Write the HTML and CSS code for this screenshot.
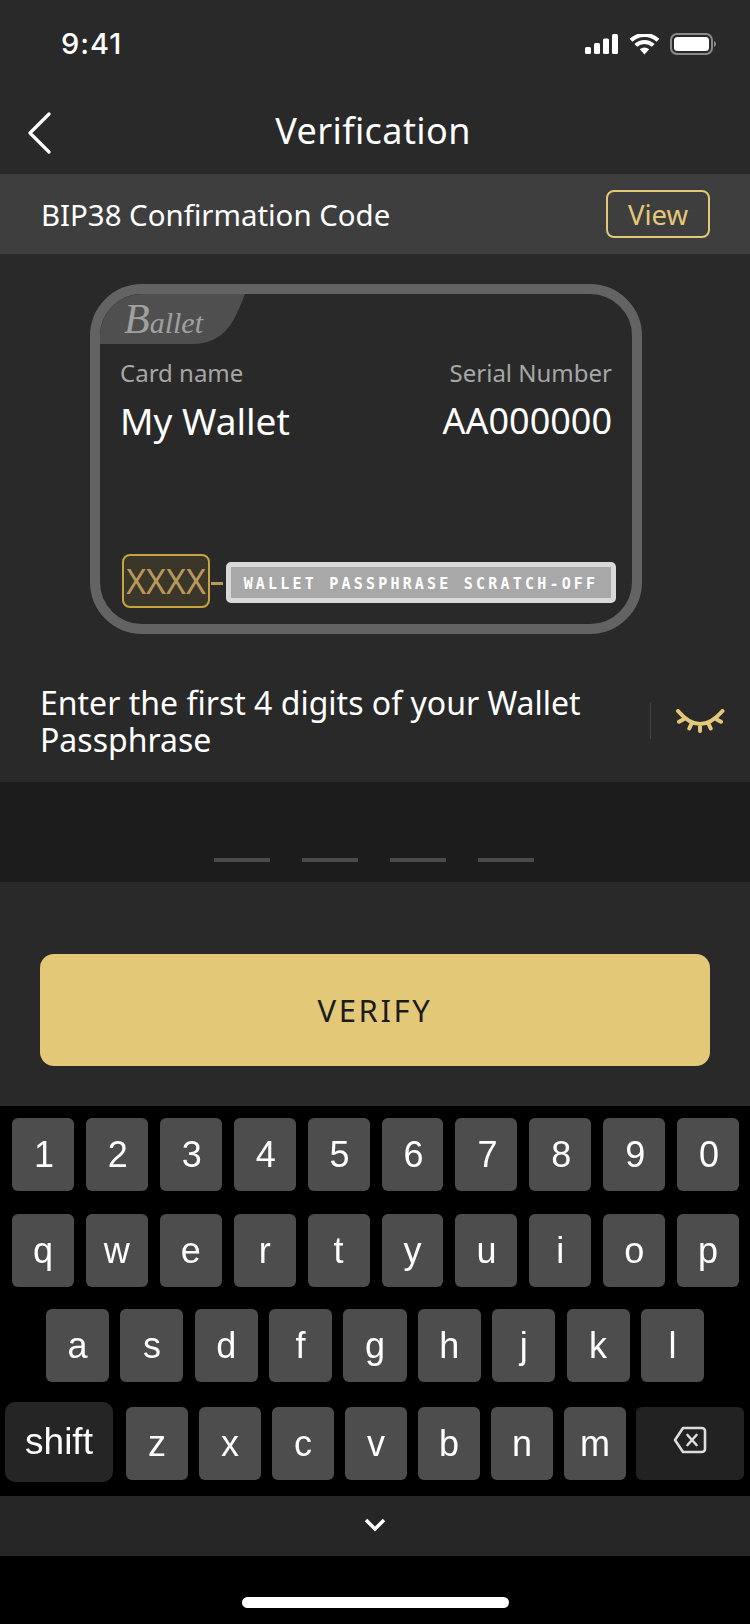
FILE: index.html
```html
<!DOCTYPE html>
<html lang="en">
<head>
<meta charset="utf-8">
<title>Verification</title>
<link rel="stylesheet" href="styles.css">
</head>
<body>
<div class="app">
  <div class="status">
    <span class="time">9:41</span>
    <div class="status-icons">
      <svg class="ic-signal" viewBox="0 0 33 20"><rect x="0" y="13" width="6" height="7" rx="1.5"/><rect x="9" y="9" width="6" height="11" rx="1.5"/><rect x="18" y="4.5" width="6" height="15.5" rx="1.5"/><rect x="27" y="0" width="6" height="20" rx="1.5"/></svg>
      <svg class="ic-wifi" viewBox="0 0 31 21"><path d="M15.5 20.5l-4.7-5.2a7 7 0 0 1 9.4 0z"/><path class="arc" d="M6.8 11.4a12.6 12.6 0 0 1 17.4 0"/><path class="arc" d="M2 6.3a19.6 19.6 0 0 1 27 0"/></svg>
      <svg class="ic-batt" viewBox="0 0 46 22"><rect class="batt-shell" x="1" y="1" width="41" height="20" rx="6"/><rect class="batt-fill" x="4" y="4" width="35" height="14" rx="3.5"/><path class="batt-nub" d="M44 8c1.300.4 2 1.600 2 3s-.7 2.600-2 3z"/></svg>
    </div>
  </div>

  <header class="nav">
    <svg class="ic-back" viewBox="0 0 24 42"><path d="M22 2L3 21l19 19"/></svg>
    <h1 class="nav-title">Verification</h1>
  </header>

  <div class="code-bar">
    <span class="code-label">BIP38 Confirmation Code</span>
    <span class="view-btn">View</span>
  </div>

  <div class="card-wrap">
    <div class="card">
      <div class="tab"><span class="brand">Ballet</span></div>
      <div class="card-labels"><span>Card name</span><span>Serial Number</span></div>
      <div class="card-values"><span>My Wallet</span><span class="serial">AA000000</span></div>
      <div class="card-foot">
        <span class="xxxx">XXXX</span>
        <span class="dash"></span>
        <div class="scratch"><span>WALLET PASSPHRASE SCRATCH-OFF</span></div>
      </div>
    </div>
  </div>

  <div class="prompt">
    <p class="prompt-text">Enter the first 4 digits of your Wallet Passphrase</p>
    <span class="prompt-div"></span>
    <svg class="ic-eye" viewBox="0 0 50 24"><path d="M3 2Q25 28 47.500 2M10 9.500L4 12.700M17 13.500L14.300 19.500M25 15V22M33 13.500L35.700 19.500M40 9.500L46 12.700"/></svg>
  </div>

  <div class="pin">
    <span class="pin-slot"></span><span class="pin-slot"></span><span class="pin-slot"></span><span class="pin-slot"></span>
  </div>

  <div class="action"><div class="verify">VERIFY</div></div>

  <div class="keyboard">
    <div class="row row-num">
      <span class="key">1</span><span class="key">2</span><span class="key">3</span><span class="key">4</span><span class="key">5</span><span class="key">6</span><span class="key">7</span><span class="key">8</span><span class="key">9</span><span class="key">0</span>
    </div>
    <div class="row row-top">
      <span class="key">q</span><span class="key">w</span><span class="key">e</span><span class="key">r</span><span class="key">t</span><span class="key">y</span><span class="key">u</span><span class="key">i</span><span class="key">o</span><span class="key">p</span>
    </div>
    <div class="row row-mid">
      <span class="key">a</span><span class="key">s</span><span class="key">d</span><span class="key">f</span><span class="key">g</span><span class="key">h</span><span class="key">j</span><span class="key">k</span><span class="key">l</span>
    </div>
    <div class="row row-bot">
      <span class="key shift">shift</span>
      <div class="letters">
        <span class="key">z</span><span class="key">x</span><span class="key">c</span><span class="key">v</span><span class="key">b</span><span class="key">n</span><span class="key">m</span>
      </div>
      <span class="key del"><svg class="ic-del" viewBox="0 0 34 28"><path d="M10 2H29a3 3 0 0 1 3 3V23a3 3 0 0 1-3 3H10L2 14zM14.500 9l9 10M23.500 9l-9 10"/></svg></span>
    </div>
    <div class="kb-bar">
      <svg class="ic-down" viewBox="0 0 22 14"><path d="M2 2l9 9 9-9"/></svg>
    </div>
    <div class="home-zone"><span class="home"></span></div>
  </div>
</div>
</body>
</html>
```
FILE: styles.css
```css
* { box-sizing: border-box; }
html, body { margin: 0; padding: 0; }
body { background: #292929; font-family: "Noto Sans", sans-serif; color: #fff; }
.app { width: 750px; height: 1624px; display: flex; flex-direction: column; overflow: hidden; }

.status { height: 88px; flex: none; display: flex; align-items: center; justify-content: space-between; padding: 0 34px 0 61px; }
.time { font-family: Inter, sans-serif; font-weight: 500; font-size: 29px; line-height: 34px; letter-spacing: 1px; }
.status-icons { display: flex; align-items: center; }
.ic-signal { width: 33px; height: 20px; fill: #fff; }
.ic-wifi { width: 31px; height: 21px; margin-left: 11px; fill: #fff; }
.ic-wifi .arc { fill: none; stroke: #fff; stroke-width: 4; }
.ic-batt { width: 46px; height: 22px; margin-left: 10px; }
.batt-shell { fill: none; stroke: #8a8a8a; stroke-width: 2; }
.batt-fill { fill: #fff; }
.batt-nub { fill: #8a8a8a; }

.nav { height: 86px; flex: none; display: flex; align-items: center; justify-content: center; padding-right: 4px; position: relative; }
.ic-back { position: absolute; left: 27px; top: 24px; width: 24px; height: 42px; fill: none; stroke: #fff; stroke-width: 3.2; stroke-linecap: round; stroke-linejoin: round; }
.nav-title { margin: 0; font-size: 36px; font-weight: 400; line-height: 48px; letter-spacing: .4px; }

.code-bar { height: 80px; flex: none; background: #3e3e3e; display: flex; align-items: center; justify-content: space-between; padding: 0 40px; }
.code-label { font-size: 29.400px; line-height: 40px; padding: 2px 0 0 1px; }
.view-btn { width: 104px; height: 48px; border: 2px solid #e3c878; border-radius: 8px; color: #e3c878; font-size: 27.500px; display: flex; align-items: center; justify-content: center; }

.card-wrap { height: 380px; flex: none; padding: 30px 108px 0 90px; }
.card { width: 552px; height: 350px; border: 10px solid #636363; border-radius: 52px; display: flex; flex-direction: column; overflow: hidden; }
.tab { width: 145px; height: 50px; flex: none; background: #4f4f4f; clip-path: path("M0 0H145C136 22 128 50 92 50H0Z"); padding: 0 0 0 24px; }
.brand { display: inline-block; font-family: "Liberation Serif", serif; font-style: italic; font-size: 30px; line-height: 50px; color: #a0a0a0; }
.brand::first-letter { font-size: 42px; }
.card-labels { display: flex; justify-content: space-between; padding: 0 20px; margin-top: 12px; font-size: 24px; line-height: 34px; color: #a6a6a6; }
.card-values { display: flex; justify-content: space-between; align-items: center; padding: 0 20px; margin-top: 7px; font-size: 37px; line-height: 48px; }
.serial { font-size: 36px; }
.card-foot { display: flex; align-items: center; padding: 0 16px 0 22px; margin-top: 109px; }
.xxxx { width: 88px; height: 54px; flex: none; border: 2px solid #c9a33f; border-radius: 8px; background: #3b362a; color: #b8995a; font-size: 34px; display: flex; align-items: center; justify-content: center; }
.dash { width: 12px; height: 3px; flex: none; background: #b8995a; margin: 4px 3px 0 1px; }
.scratch { width: 390px; height: 41px; flex: none; margin-top: 2px; padding-top: 3px; background: #a8a8a8; border: 5px solid #d9d9d9; border-radius: 5px; display: flex; align-items: center; justify-content: center; }
.scratch span { font-family: "DejaVu Sans Mono", monospace; font-weight: 700; font-size: 15px; letter-spacing: 3.200px; color: #fff; white-space: nowrap; }

.prompt { height: 148px; flex: none; display: flex; align-items: center; padding: 26px 25px 0 40px; }
.prompt-text { margin: 0; width: 600px; font-size: 32px; line-height: 37px; flex: none; }
.prompt-div { width: 1px; height: 36px; background: #444; margin: 0 0 0 10px; flex: none; }
.ic-eye { width: 50px; height: 24px; margin-left: 24px; flex: none; fill: none; stroke: #e3c878; stroke-width: 4; stroke-linecap: round; }

.pin { height: 100px; flex: none; background: #1c1c1c; display: flex; justify-content: center; gap: 32px; padding: 76px 2px 0 0; }
.pin-slot { width: 56px; height: 4px; background: #4a4a4a; }

.action { height: 224px; flex: none; padding: 72px 40px 0; }
.verify { height: 112px; background: #e3c878; border-radius: 14px; display: flex; align-items: center; justify-content: center; color: #1c1c1c; font-size: 31px; letter-spacing: 2.600px; }

.keyboard { flex: 1; background: #000; display: flex; flex-direction: column; font-family: "Liberation Sans", sans-serif; }
.row { display: flex; flex: none; }
.key { height: 73px; flex: 1; background: #4d4d4d; border-radius: 6px; color: #fff; font-size: 36px; display: flex; align-items: center; justify-content: center; filter: blur(.5px); }
.row-num { padding: 12px 11px 0 12px; gap: 12px; }
.row-num .key { padding-left: 2px; }
.row-top { padding: 23px 11px 0 12px; gap: 12px; }
.row-mid { padding: 22px 46px 0 46px; gap: 11.300px; }
.row-bot { padding: 20px 6px 0 5px; align-items: center; }
.key.shift { flex: none; width: 108px; height: 80px; background: #252525; border-radius: 10px; font-size: 37px; }
.letters { flex: 1; display: flex; gap: 11px; padding: 3px 10px 0 13px; }
.key.del { flex: none; width: 108px; margin-top: 3px; background: #222; }
.ic-del { width: 34px; height: 28px; fill: none; stroke: #ddd; stroke-width: 2.600; stroke-linejoin: round; stroke-linecap: round; margin-top: -7px; }
.kb-bar { height: 60px; flex: none; margin-top: 14px; background: #262626; display: flex; align-items: center; justify-content: center; }
.ic-down { width: 22px; height: 14px; fill: none; stroke: #fff; stroke-width: 3.500; margin-bottom: 2px; }
.home-zone { flex: 1; display: flex; justify-content: center; padding-top: 41px; }
.home { width: 267px; height: 11px; background: #fff; border-radius: 6px; }
```
